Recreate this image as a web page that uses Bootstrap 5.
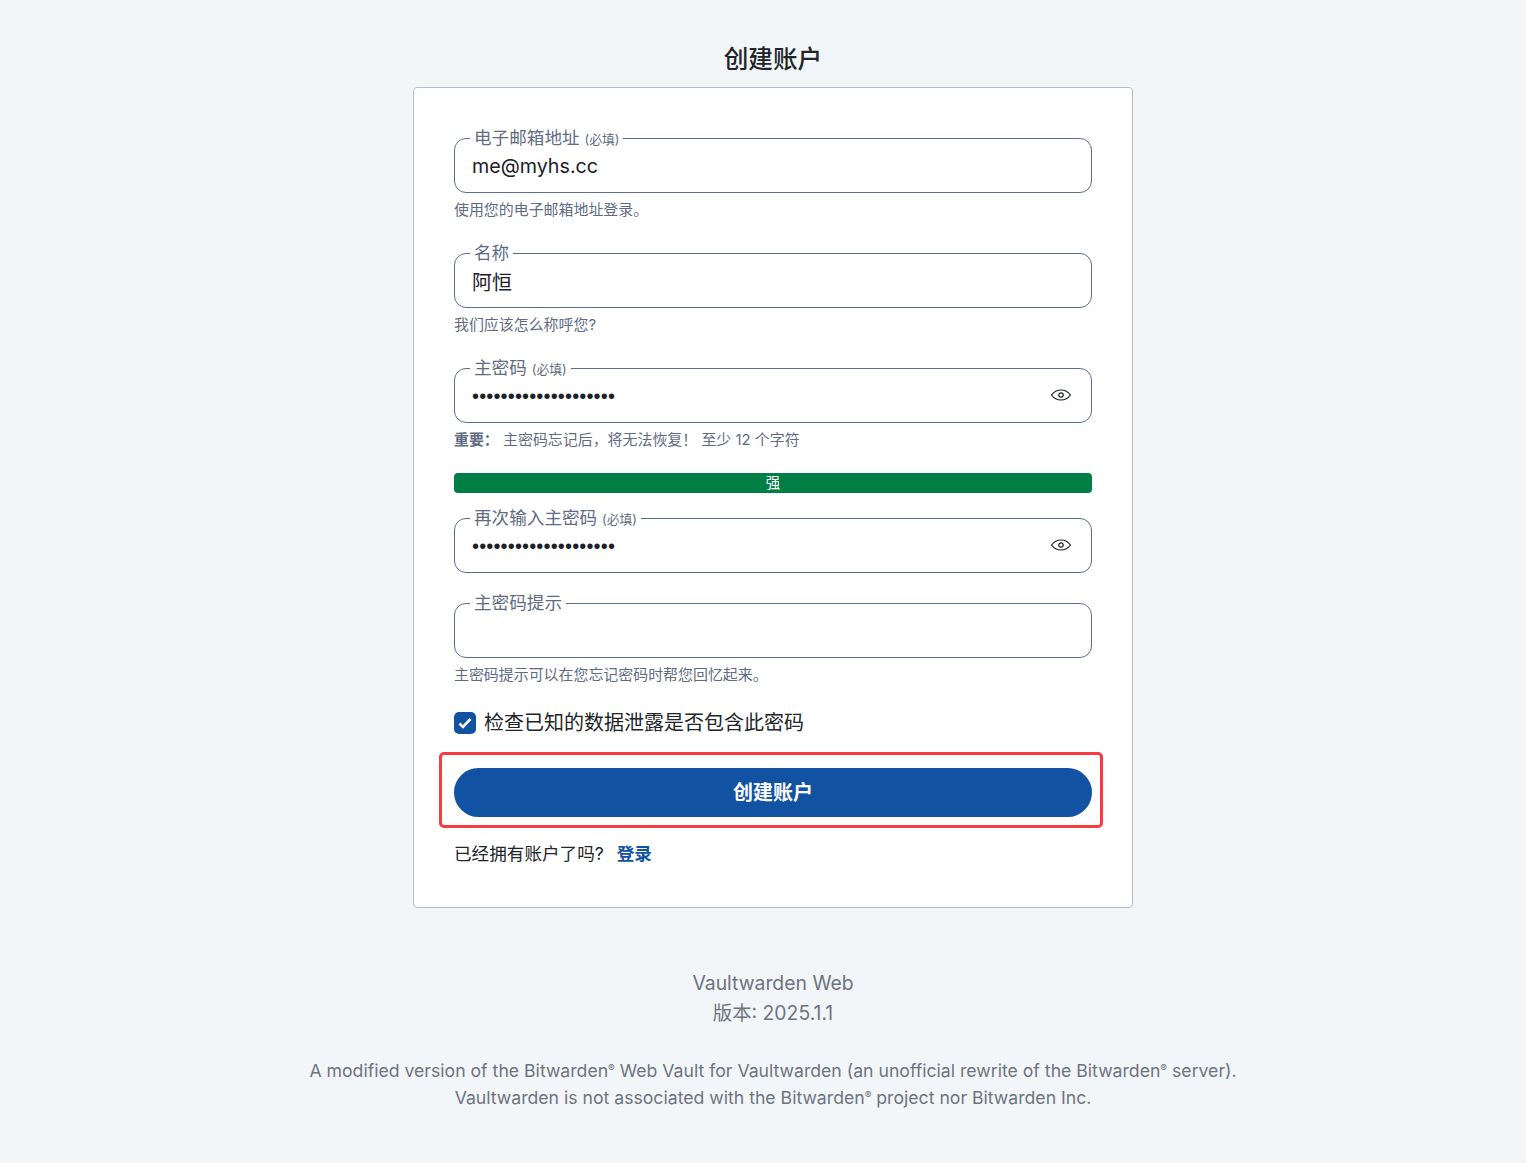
<!DOCTYPE html>
<html lang="zh-CN"><head><meta charset="utf-8">
<link rel="stylesheet" href="https://cdn.jsdelivr.net/npm/bootstrap@5.3.0/dist/css/bootstrap.min.css">
<style>
body{background:#f3f6f9;font-family:Inter,"Noto Sans CJK SC",sans-serif;color:#212529;margin:0;min-height:1163px}
.page-wrap{width:720px;margin:0 auto 0 413px}
.title-head{font-size:24.64px;font-weight:500;line-height:32px;padding-top:43px;margin:0 0 12px;text-align:center}
.form-card{background:#fff;border:1px solid #b4bccb;border-radius:4px;padding:40px;height:821px}
.fld{position:relative;height:55px;border:1px solid #5a6d94;border-radius:12px;padding:5px 17px 0;display:flex;align-items:center;font-size:20px;color:#1b2029}
.fld-label{position:absolute;left:15px;top:-12px;background:#fff;padding:0 4px;font-size:17.6px;line-height:22px;color:#5f6b82}
.fld-label small{font-size:12.8px}
.val-latin{font-size:19.7px;margin-top:-3px}
.hint-txt{font-size:14.95px;line-height:20px;color:#5f6b82;margin-top:7px}
.dots{font-family:"Liberation Sans",sans-serif;font-size:20px;letter-spacing:.15px;line-height:1;margin-bottom:4px}
.eye-ico{position:absolute;right:19px;top:18px}
.fld-first{margin-top:10px}
.gap-field{margin-top:33px}
.gap-bar{margin-top:23px}
.gap-after-bar{margin-top:25px}
.gap-hintless{margin-top:30px}
.gap-check{margin-top:25px}
.gap-submit{margin-top:32px}
.gap-login{margin-top:25px}
.bar-strength{height:20px;background:#017e45;border-radius:4px;color:#fff;font-size:14.4px;line-height:20px;text-align:center}
.chk-box{width:22px;height:22px;background:#1252a3;border-radius:5px;display:flex;align-items:center;justify-content:center}
.chk-text{font-size:20px;line-height:26px}
.submit-outline{position:relative}
.submit-pill{background:#1252a3;color:#fff;font-weight:700;font-size:20px;height:49px;border-radius:25px;border:0;width:100%;padding-top:7px}
.submit-pill:hover{background:#1252a3;color:#fff}
.red-box{position:absolute;left:-15px;right:-11px;top:-16px;bottom:-11px;border:3px solid #f93a40;border-radius:5px;pointer-events:none}
.login-line{font-size:17.6px;line-height:24px}
.login-line a{color:#1252a3;font-weight:700;text-decoration:none;margin-left:8px}
.foot-a{color:#6d7480;font-size:19.36px;line-height:30px;text-align:center;margin-top:60px}
.foot-b{color:#6d7480;font-size:17.65px;line-height:27px;text-align:center;margin-top:29px;width:1526px;margin-left:-403px}
sup{font-size:10px}
</style></head><body>
<div class="page-wrap">
<h1 class="title-head">创建账户</h1>
<div class="form-card d-flex flex-column">
<div class="fld fld-first"><span class="fld-label">电子邮箱地址 <small>(必填)</small></span><span class="val-latin">me@myhs.cc</span></div>
<div class="hint-txt">使用您的电子邮箱地址登录。</div>
<div class="fld gap-field"><span class="fld-label">名称</span>阿恒</div>
<div class="hint-txt">我们应该怎么称呼您?</div>
<div class="fld gap-field"><span class="fld-label">主密码 <small>(必填)</small></span><span class="dots">••••••••••••••••••••</span>
<svg class="eye-ico" width="22" height="16" viewBox="0 0 22 16" fill="none" stroke="#1b2029" stroke-width="1.2"><path d="M1.5 8C4 4.6 7.300 3 11 3s7 1.600 9.500 5c-2.500 3.400-5.800 5-9.500 5S4 11.400 1.500 8z"/><circle cx="11" cy="8" r="2.200"/></svg></div>
<div class="hint-txt"><b>重要：</b> 主密码忘记后，将无法恢复！ 至少 12 个字符</div>
<div class="bar-strength gap-bar">强</div>
<div class="fld gap-after-bar"><span class="fld-label">再次输入主密码 <small>(必填)</small></span><span class="dots">••••••••••••••••••••</span>
<svg class="eye-ico" width="22" height="16" viewBox="0 0 22 16" fill="none" stroke="#1b2029" stroke-width="1.2"><path d="M1.5 8C4 4.6 7.300 3 11 3s7 1.600 9.500 5c-2.500 3.400-5.800 5-9.500 5S4 11.400 1.500 8z"/><circle cx="11" cy="8" r="2.200"/></svg></div>
<div class="fld gap-hintless"><span class="fld-label">主密码提示</span></div>
<div class="hint-txt">主密码提示可以在您忘记密码时帮您回忆起来。</div>
<div class="d-flex align-items-center gap-2 gap-check"><span class="chk-box"><svg width="16" height="16" viewBox="0 0 16 16" fill="none" stroke="#fff" stroke-width="2.600"><path d="M2.500 8.500l3.500 3.500L13.500 4"/></svg></span><span class="chk-text">检查已知的数据泄露是否包含此密码</span></div>
<div class="submit-outline gap-submit"><button class="btn submit-pill">创建账户</button><div class="red-box"></div></div>
<div class="login-line gap-login">已经拥有账户了吗? <a href="#">登录</a></div>
</div>
<div class="foot-a">Vaultwarden Web<br>版本: 2025.1.1</div>
<div class="foot-b">A modified version of the Bitwarden<sup>®</sup> Web Vault for Vaultwarden (an unofficial rewrite of the Bitwarden<sup>®</sup> server).<br>Vaultwarden is not associated with the Bitwarden<sup>®</sup> project nor Bitwarden Inc.</div>
</div>
</body></html>
